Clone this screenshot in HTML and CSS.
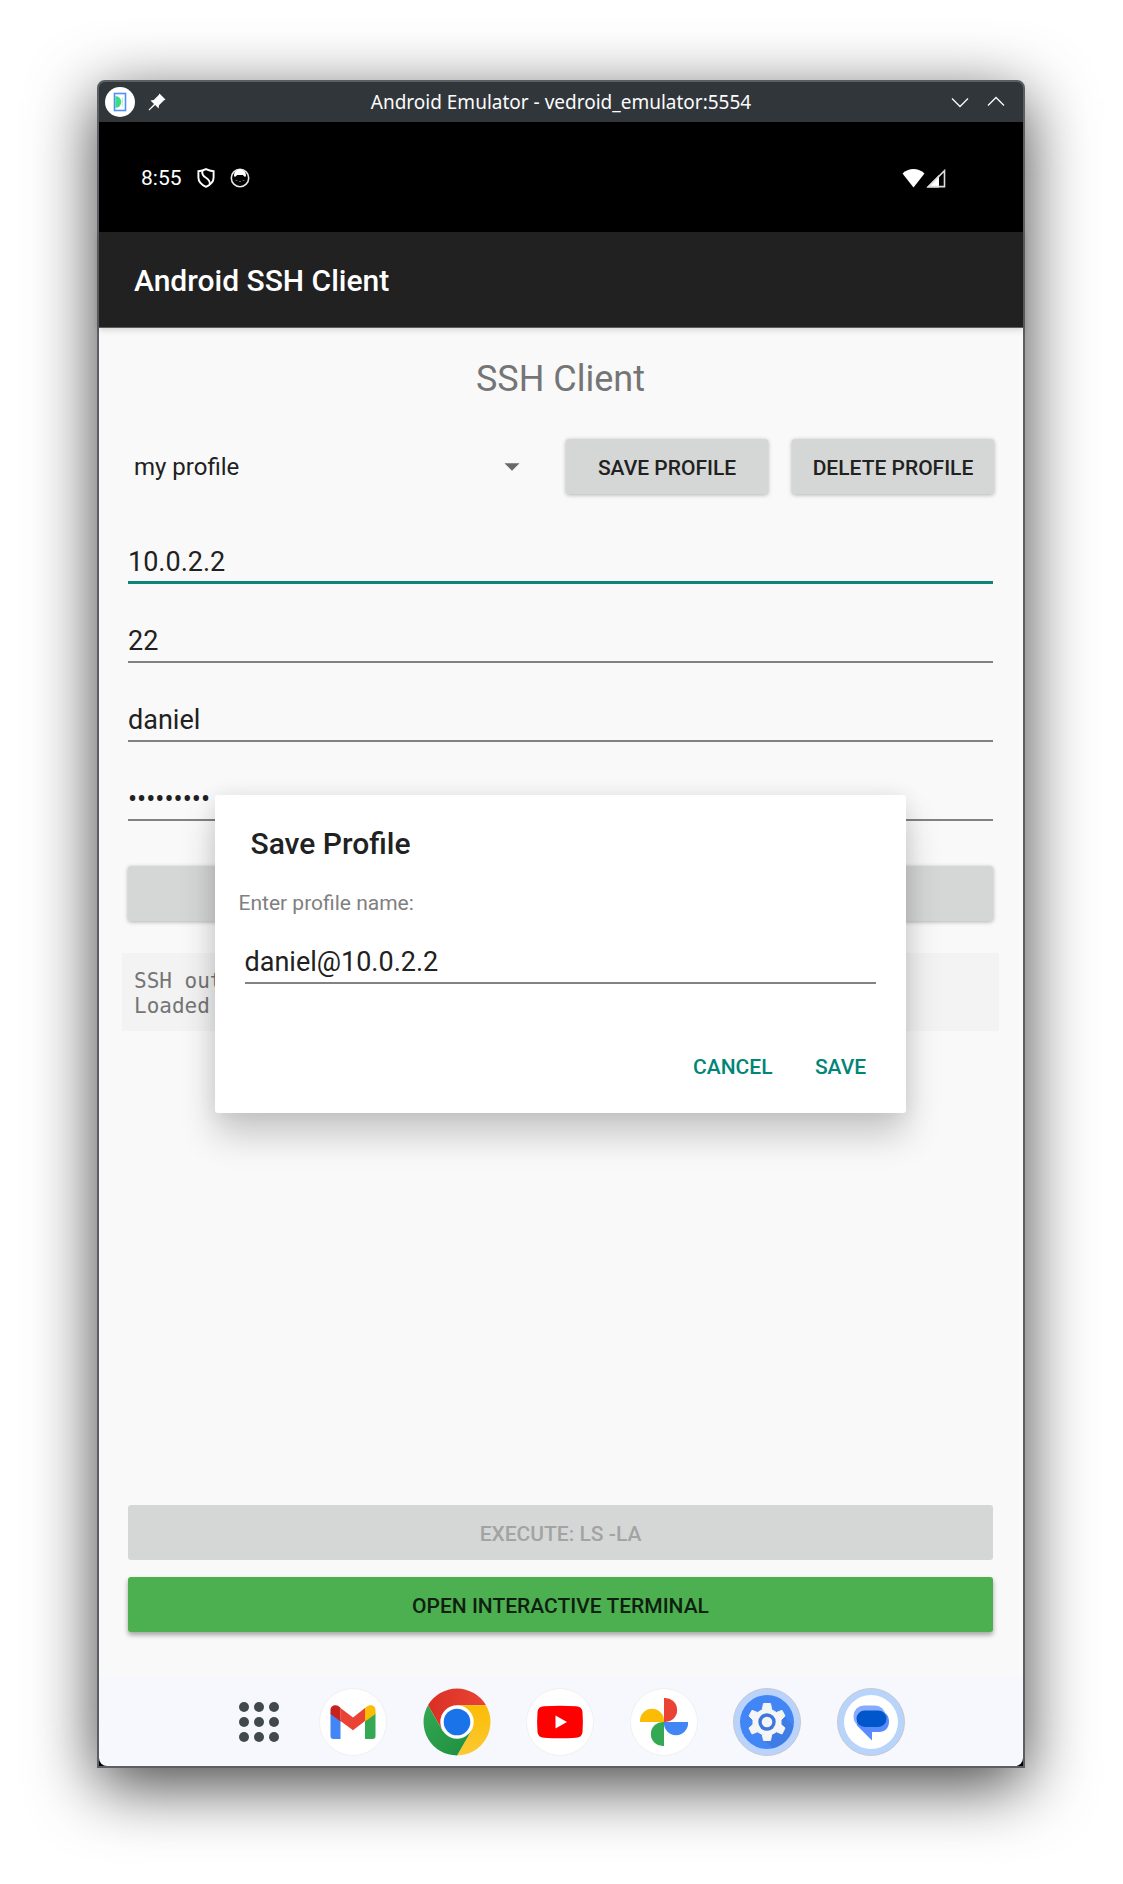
FILE: index.html
```html
<!DOCTYPE html>
<html lang="en">
<head>
<meta charset="utf-8">
<meta name="viewport" content="width=device-width, initial-scale=1">
<title>Android Emulator - vedroid_emulator:5554</title>
<link rel="stylesheet" href="styles.css">
</head>
<body>
<div class="window">
  <header class="titlebar">
    <div class="titlebar-side">
      <svg class="emulator-logo" viewBox="0 0 30 30" aria-hidden="true">
        <circle cx="15" cy="15" r="15" fill="#fff"/>
        <rect x="9.500" y="6.500" width="11" height="17" fill="#fff" stroke="#4f8ff7" stroke-width="1.600"/>
        <path d="M10.300 9a6 6 0 0 1 0 12z" fill="#3ddc84"/>
        <path d="M17.500 10.500v9" stroke="#b9f0d2" stroke-width="1"/>
      </svg>
      <button class="title-button" type="button" aria-label="Pin window">
        <svg width="18" height="18" viewBox="0 0 18 18"><path d="M11.500.5 17.500 6.500 15.800 7.500 11 12.300 10.600 15.500 7.200 12.100 1.300 17.600.5 16.800 6 10.900 2.500 7.400 5.700 7 10.500 2.200z" fill="#fcfcfc"/></svg>
      </button>
    </div>
    <div class="titlebar-title">Android Emulator - vedroid_emulator:5554</div>
    <div class="titlebar-side titlebar-controls">
      <button class="title-button" type="button" aria-label="Minimize">
        <svg width="18" height="18" viewBox="0 0 18 18"><path d="M1 5.500 9 13.500 17 5.500" fill="none" stroke="#fcfcfc" stroke-width="1.300"/></svg>
      </button>
      <button class="title-button" type="button" aria-label="Maximize">
        <svg width="18" height="18" viewBox="0 0 18 18"><path d="M1 12.500 9 4.500 17 12.500" fill="none" stroke="#fcfcfc" stroke-width="1.300"/></svg>
      </button>
    </div>
  </header>

  <div class="screen">
    <div class="status-bar">
      <div class="status-group">
        <span class="clock">8:55</span>
        <svg width="18" height="20" viewBox="0 0 18 20" aria-hidden="true"><g fill="none" stroke="#fff" stroke-width="1.900"><path d="M9 1.100Q12.500 2.800 16.600 3.200V9.500C16.600 13.500 13 17 9 18.800 5 17 1.400 13.500 1.400 9.500V3.200Q5.500 2.800 9 1.100z"/><path d="M5.500 2.500C4.500 6 6 8 9 9.800S13 13 12.800 16"/></g></svg>
        <svg width="20" height="20" viewBox="0 0 20 20" aria-hidden="true"><circle cx="10" cy="10" r="8.700" fill="none" stroke="#e6e6e6" stroke-width="1.600"/><path d="M4 8C4 3.500 7 1.300 10 1.300S16 3.500 16 8L15 9 12.800 7H7.200L5 9z" fill="#fff"/><path d="M5.500 12.500h2M9 13.500h2M12.500 12.500h2" stroke="#555"/></svg>
      </div>
      <div class="status-group status-signal">
        <svg width="23" height="20" viewBox="0 0 23 20" aria-hidden="true"><path d="M11.500 19.500.5 5.500C3.500 2.500 7.300 1 11.500 1S19.500 2.500 22.500 5.500z" fill="#fff"/></svg>
        <svg width="20" height="20" viewBox="0 0 20 20" aria-hidden="true"><path d="M.5 19.500H13V7z" fill="#fff"/><path d="M2.500 18.600H18.500V2.600z" fill="none" stroke="#ddd" stroke-width="1.600"/></svg>
      </div>
    </div>

    <div class="app">
      <div class="app-bar">Android SSH Client</div>

      <main class="content">
        <h1 class="heading">SSH Client</h1>
        <div class="profile-row">
          <div class="spinner">
            <select class="spinner-select" aria-label="Profile"><option>my profile</option></select>
            <svg class="spinner-arrow" width="16" height="8" viewBox="0 0 16 8" aria-hidden="true"><path d="M.5.300H15.500L8 7.800z" fill="#696969"/></svg>
          </div>
          <button class="button" type="button">SAVE PROFILE</button>
          <button class="button" type="button">DELETE PROFILE</button>
        </div>
        <div class="fields">
          <input class="field field-active" type="text" value="10.0.2.2" aria-label="Host">
          <input class="field" type="text" value="22" aria-label="Port">
          <input class="field" type="text" value="daniel" aria-label="Username">
          <input class="field" type="password" value="123456789" aria-label="Password">
        </div>
        <button class="button connect" type="button" aria-label="Connect"></button>
        <div class="output">SSH output<br>Loaded</div>
        <div class="actions">
          <button class="button" type="button" disabled>EXECUTE: LS -LA</button>
          <button class="button button-green" type="button">OPEN INTERACTIVE TERMINAL</button>
        </div>
      </main>

      <div class="overlay">
        <form class="dialog" role="dialog" aria-labelledby="dialog-title">
          <h2 class="dialog-title" id="dialog-title">Save Profile</h2>
          <label class="dialog-label" for="profile-name">Enter profile name:</label>
          <input class="field dialog-field" id="profile-name" type="text" value="daniel@10.0.2.2">
          <div class="dialog-actions">
            <button class="text-button" type="button">CANCEL</button>
            <button class="text-button" type="button">SAVE</button>
          </div>
        </form>
      </div>
    </div>

    <nav class="taskbar" aria-label="Taskbar">
      <button class="task-button" type="button" aria-label="All apps">
        <svg width="40" height="40" viewBox="0 0 40 40" fill="#42494c"><circle cx="5" cy="5" r="5"/><circle cx="20" cy="5" r="5"/><circle cx="35" cy="5" r="5"/><circle cx="5" cy="20" r="5"/><circle cx="20" cy="20" r="5"/><circle cx="35" cy="20" r="5"/><circle cx="5" cy="35" r="5"/><circle cx="20" cy="35" r="5"/><circle cx="35" cy="35" r="5"/></svg>
      </button>
      <div class="task-apps">
        <button class="task-button" type="button" aria-label="Gmail">
          <svg width="68" height="68" viewBox="0 0 68 68"><circle cx="34" cy="34" r="33.500" fill="#fff" stroke="#f0f0f3"/>
            <path d="M11.500 25V48a3 3 0 0 0 3 3H21.500V32z" fill="#4285f4"/>
            <path d="M46 32V51H53.500a3 3 0 0 0 3-3V25z" fill="#34a853"/>
            <path d="M21.500 20 34 29.500 46 20V33L34 42.200 21.500 33z" fill="#ea4335"/>
            <path d="M11.500 22C11.500 17.500 16.500 15.700 20 18.500L21.500 19.700V33.500L11.500 26z" fill="#c5221f"/>
            <path d="M56.500 22C56.500 17.500 51.500 15.700 48 18.500L46 20V33.500L56.500 26z" fill="#fbbc04"/></svg>
        </button>
        <button class="task-button" type="button" aria-label="Chrome">
          <svg width="68" height="68" viewBox="0 0 68 68">
            <defs>
              <linearGradient id="chrome-red"><stop offset="0" stop-color="#d93025"/><stop offset="1" stop-color="#ea4335"/></linearGradient>
              <linearGradient id="chrome-green" x1="0" y1="0" x2="1" y2="1"><stop offset="0" stop-color="#34a853"/><stop offset="1" stop-color="#1e8e3e"/></linearGradient>
              <linearGradient id="chrome-yellow" x1="0" y1="1" x2="0" y2="0"><stop offset="0" stop-color="#fcc934"/><stop offset="1" stop-color="#fbbc04"/></linearGradient>
            </defs>
            <path d="M5 17.300A33.500 33.500 0 0 1 63 17.300H34L19.500 42.400z" fill="url(#chrome-red)"/>
            <path d="M63 17.300A33.500 33.500 0 0 1 34 67.500L48.500 42.400 34 17.300z" fill="url(#chrome-yellow)"/>
            <path d="M34 67.500A33.500 33.500 0 0 1 5 17.300L19.500 42.400 48.500 42.400z" fill="url(#chrome-green)"/>
            <circle cx="34" cy="34" r="16.700" fill="#fff"/><circle cx="34" cy="34" r="13.300" fill="#1a73e8"/></svg>
        </button>
        <button class="task-button" type="button" aria-label="YouTube">
          <svg width="68" height="68" viewBox="0 0 68 68"><circle cx="34" cy="34" r="33.500" fill="#fff" stroke="#f0f0f3"/><path d="M18 18.300Q34 17 50 18.300Q56 18.500 56.500 24Q57.300 34 56.500 44Q56 49.500 50 49.700Q34 51 18 49.700Q12 49.500 11.500 44Q10.700 34 11.500 24Q12 18.500 18 18.300z" fill="#f00"/><path d="M29.500 27.500 41 34 29.500 40.500z" fill="#fff"/></svg>
        </button>
        <button class="task-button" type="button" aria-label="Photos">
          <svg width="68" height="68" viewBox="0 0 68 68"><circle cx="34" cy="34" r="33.500" fill="#fff" stroke="#f0f0f3"/><path d="M34 34V10A12.050 12.050 0 1 1 34 34z" fill="#ea4335"/><path d="M34 34H58A12.050 12.050 0 1 1 34 34z" fill="#4285f4"/><path d="M34 34V58A12.050 12.050 0 1 1 34 34z" fill="#34a853"/><path d="M34 34H10A12.050 12.050 0 1 1 34 34z" fill="#fbbc04"/></svg>
        </button>
        <button class="task-button" type="button" aria-label="Settings">
          <svg width="68" height="68" viewBox="0 0 68 68"><circle cx="34" cy="34" r="33.500" fill="#b9d3fc" stroke="#c5c9d0"/><circle cx="34" cy="34" r="27" fill="#4285f4"/><path d="M38 33 51 27 60 38A27 27 0 0 1 40 60L30 51z" fill="#3f7ce4"/>
            <path d="M30.500 15.500H37.500L38.700 21.700 43.500 24.500 49 22.300 52 28 48 32V36.500L52 40 49 46 43.500 43.800 38.700 46.500 37.500 52.500H30.500L29.300 46.500 24.500 43.800 19 46 16 40 20 36.500V32L16 28 19 22.300 24.500 24.500 29.300 21.700z" fill="#f5f5f5" stroke="#f5f5f5" stroke-linejoin="round"/><circle cx="34" cy="34" r="8.700" fill="#3c78dc"/><circle cx="34" cy="34" r="5.300" fill="#f5f5f5"/></svg>
        </button>
        <button class="task-button" type="button" aria-label="Messages">
          <svg width="68" height="68" viewBox="0 0 68 68"><circle cx="34" cy="34" r="33.500" fill="#b8d4fb" stroke="#c5c9d0"/><circle cx="34" cy="34" r="27" fill="#fff"/><rect x="16.500" y="17.500" width="32" height="22" rx="10.500" fill="#86abff"/><path d="M40 23C48 23 52 27 52 33.500S48 44 42 44H35V52.500L20 37.500V30z" fill="#598bff"/><rect x="19.500" y="22.500" width="30" height="16.500" rx="8.200" fill="#0057cc"/></svg>
        </button>
      </div>
    </nav>
  </div>
</div>
</body>
</html>
```
FILE: styles.css
```css
* {
  box-sizing: border-box;
}

body {
  margin: 0;
  padding: 80px 98px 116px 97px;
  background: #fff;
  color: #212121;
  font-family: Roboto, "Noto Sans", sans-serif;
}

button,
input,
select {
  margin: 0;
  border: 0;
  background: none;
  color: inherit;
  font: inherit;
}

svg {
  display: block;
  flex: none;
}

/* Desktop window frame */
.window {
  display: flex;
  flex-direction: column;
  min-height: calc(100vh - 196px);
  border: 2px solid #5b5f63;
  border-radius: 8px 8px 0 0;
  background: #31363b;
  box-shadow: 0 17px 66px rgba(0, 0, 0, 0.74);
}

.titlebar {
  display: grid;
  grid-template-columns: 1fr auto 1fr;
  align-items: center;
  height: 40px;
  padding: 0 6px;
  color: #fcfcfc;
}

.titlebar-side {
  display: flex;
  align-items: center;
  gap: 13px;
}

.titlebar-controls {
  justify-content: flex-end;
  gap: 18px;
  padding-right: 12px;
}

.titlebar-title {
  font: 19px/28px "Noto Sans", sans-serif;
}

.emulator-logo {
  width: 30px;
  height: 30px;
}

.title-button,
.task-button {
  display: block;
  padding: 0;
}

/* Device screen */
.screen {
  display: flex;
  flex: 1;
  flex-direction: column;
  background: #000;
}

.status-bar {
  display: flex;
  align-items: center;
  justify-content: space-between;
  height: 110px;
  padding: 2px 77px 0 42px;
  color: #fff;
}

.status-group {
  display: flex;
  align-items: center;
  gap: 15px;
}

.status-signal {
  gap: 1px;
}

.clock {
  font-size: 21px;
  line-height: 28px;
}

.app {
  position: relative;
  display: flex;
  flex: 1;
  flex-direction: column;
  background: #f9f9f9;
}

.app-bar {
  height: 96px;
  padding: 0 35px;
  border-bottom: 1px solid #5f5c5c;
  background: #212121;
  box-shadow: 0 2px 6px rgba(0, 0, 0, 0.15);
  color: #fff;
  font-size: 30px;
  font-weight: 500;
  line-height: 98px;
}

.content {
  display: flex;
  flex: 1;
  flex-direction: column;
  padding: 30px 30px 45px 29px;
}

.heading {
  margin: 0 0 39px;
  color: #757575;
  font-size: 36px;
  font-weight: 400;
  line-height: 42px;
  text-align: center;
}

.profile-row {
  display: grid;
  grid-template-columns: minmax(0, 1fr) 202px 202px;
  gap: 24px;
  margin-right: -1px;
}

.spinner {
  display: grid;
  align-items: center;
  padding: 0 22px 0 6px;
}

.spinner-select,
.spinner-arrow {
  grid-area: 1 / 1;
}

.spinner-select {
  width: 100%;
  padding: 0;
  appearance: none;
  font-size: 24px;
  line-height: 32px;
}

.spinner-arrow {
  justify-self: end;
  pointer-events: none;
}

.button {
  height: 55px;
  padding: 2px 6px 0;
  border-radius: 3px;
  background: #d5d7d6;
  box-shadow: 0 1px 4px rgba(0, 0, 0, 0.3);
  font-size: 21px;
  font-weight: 500;
  line-height: 28px;
  white-space: nowrap;
}

.button:disabled {
  box-shadow: none;
  color: #a2a3a3;
}

.button-green {
  background: #4caf50;
  box-shadow: 0 3px 5px rgba(0, 0, 0, 0.35);
  color: #0f1f10;
}

.fields {
  display: flex;
  flex-direction: column;
  gap: 35px;
  margin-top: 46px;
}

.field {
  width: 100%;
  height: 44px;
  padding: 6px 0 4px;
  border-bottom: 2px solid #828282;
  border-radius: 0;
  font-size: 27px;
  line-height: 32px;
  outline: none;
}

.field-active {
  border-bottom: 3px solid #0b8678;
}

.connect {
  margin-top: 45px;
}

.output {
  margin: 32px -6px 0;
  padding: 16px 12px 12px;
  background: #f3f3f3;
  color: #757575;
  font: 21px/25px "DejaVu Sans Mono", monospace;
}

.actions {
  display: flex;
  flex-direction: column;
  gap: 17px;
  margin-top: auto;
}

/* Save profile dialog */
.overlay {
  position: absolute;
  inset: 0;
  display: flex;
  align-items: center;
  justify-content: center;
  padding: 0 2px 2px 0;
}

.dialog {
  display: flex;
  flex-direction: column;
  width: 100%;
  max-width: 691px;
  padding: 31px 17px 21px 24px;
  border-radius: 3px;
  background: #fff;
  box-shadow: 0 22px 36px rgba(0, 0, 0, 0.2), 0 0 20px rgba(0, 0, 0, 0.08);
}

.dialog-title {
  margin: 0 12px 28px;
  font-size: 30px;
  font-weight: 500;
  line-height: 36px;
}

.dialog-label {
  color: #808080;
  font-size: 21px;
  line-height: 26px;
}

.dialog-field {
  width: auto;
  margin: 24px 13px 58px 6px;
}

.dialog-actions {
  display: flex;
  justify-content: flex-end;
  gap: 8px;
}

.text-button {
  min-width: 96px;
  height: 50px;
  padding: 0 12px;
  color: #008577;
  font-size: 21px;
  font-weight: 500;
  line-height: 28px;
}

/* Launcher row */
.taskbar {
  display: flex;
  align-items: center;
  justify-content: center;
  gap: 40px;
  height: 89px;
  padding-left: 22px;
  border-radius: 0 0 8px 8px;
  background: #f7f8fd;
}

.task-apps {
  display: flex;
  justify-content: space-between;
  flex: 0 1 586px;
}
```
